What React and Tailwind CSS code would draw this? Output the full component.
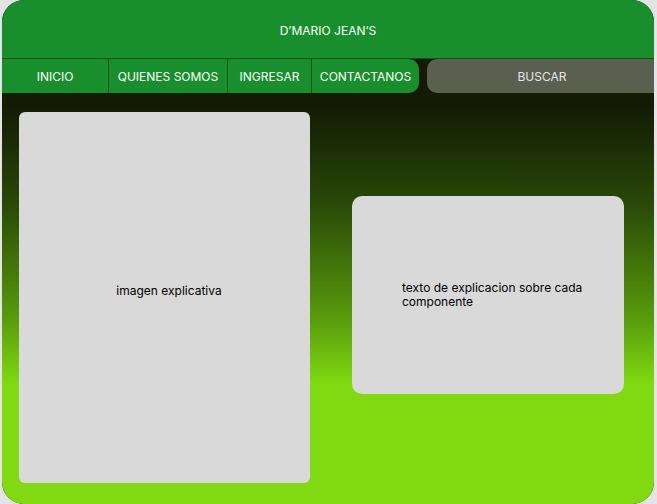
export default function App() {
  const tabs = [
    { label: "INICIO", w: "w-[107px]" },
    { label: "QUIENES SOMOS", w: "w-[119px]" },
    { label: "INGRESAR", w: "w-[84px]" },
  ];
  return (
    <div className="w-[657px] h-[504px] bg-[#e4e4e4] pl-[2px] pr-[3px] font-['Inter',sans-serif]">
      <div className="h-full rounded-[22px] overflow-hidden flex flex-col bg-[#131b05]">
        <header className="h-[59px] shrink-0 bg-[#188f2c] border-b border-[#0e5418] flex items-center justify-center text-white text-[12px] pt-[3px]">
          D’MARIO JEAN’S
        </header>
        <div className="flex-1 flex flex-col bg-[linear-gradient(180deg,#131b05_0%,#131b05_11%,#2a4a08_33%,#579a0d_58%,#80d911_73%,#80d911_100%)]">
          <nav className="h-[34px] shrink-0 flex text-white text-[12px]">
            {tabs.map((t) => (
              <div
                key={t.label}
                className={`${t.w} shrink-0 bg-[#188f2c] border-r border-[#0e5418] flex items-center justify-center pt-[2px]`}
              >
                {t.label}
              </div>
            ))}
            <div className="w-[107px] shrink-0 bg-[#188f2c] rounded-r-[10px] flex items-center justify-center pt-[2px]">
              CONTACTANOS
            </div>
            <div className="ml-[8px] w-[230px] shrink-0 bg-[#5b5f4f] rounded-l-[10px] flex items-center justify-center pt-[2px] text-[#e6e6e6]">
              BUSCAR
            </div>
          </nav>
          <main className="flex items-start pl-[17px] pt-[19px]">
            <div className="w-[291px] h-[371px] shrink-0 bg-[#d9d9d9] rounded-[6px] flex items-center justify-center pl-[9px] pb-[14px] text-[12px] text-black">
              imagen explicativa
            </div>
            <div className="ml-[42px] mt-[84px] w-[272px] h-[198px] shrink-0 bg-[#d9d9d9] rounded-[10px] flex items-center pl-[50px] pr-[30px] text-[12px] leading-[14px] text-black">
              <p className="w-[190px]">texto de explicacion sobre cada componente</p>
            </div>
          </main>
        </div>
      </div>
    </div>
  );
}
